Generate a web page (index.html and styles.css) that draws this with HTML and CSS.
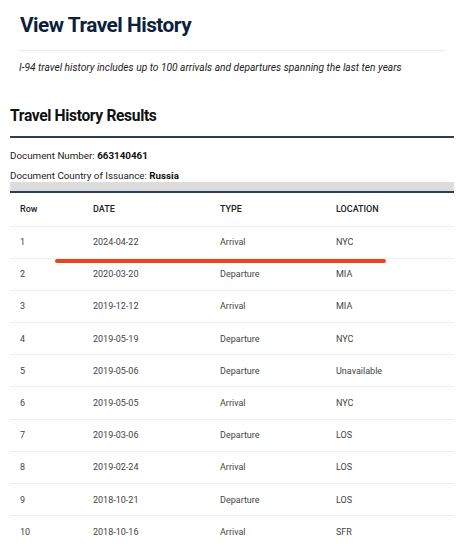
FILE: index.html
```html
<!DOCTYPE html>
<html>
<head>
<meta charset="utf-8">
<link rel="stylesheet" href="styles.css">
</head>
<body>
<section class="intro">
  <h1 class="title">View Travel History</h1>
  <p class="note">I-94 travel history includes up to 100 arrivals and departures spanning the last ten years</p>
</section>
<section class="results">
  <h2 class="subtitle">Travel History Results</h2>
  <div class="meta">
    <p class="meta-line">Document Number: <b>663140461</b></p>
    <p class="meta-line">Document Country of Issuance: <b>Russia</b></p>
  </div>
  <div class="band"></div>
  <div class="table">
    <div class="row head"><span>Row</span><span>DATE</span><span>TYPE</span><span>LOCATION</span></div>
    <div class="row first"><span>1</span><span>2024-04-22</span><span>Arrival</span><span>NYC</span><i class="mark"></i></div>
    <div class="row"><span>2</span><span>2020-03-20</span><span>Departure</span><span>MIA</span></div>
    <div class="row"><span>3</span><span>2019-12-12</span><span>Arrival</span><span>MIA</span></div>
    <div class="row"><span>4</span><span>2019-05-19</span><span>Departure</span><span>NYC</span></div>
    <div class="row"><span>5</span><span>2019-05-06</span><span>Departure</span><span>Unavailable</span></div>
    <div class="row"><span>6</span><span>2019-05-05</span><span>Arrival</span><span>NYC</span></div>
    <div class="row"><span>7</span><span>2019-03-06</span><span>Departure</span><span>LOS</span></div>
    <div class="row"><span>8</span><span>2019-02-24</span><span>Arrival</span><span>LOS</span></div>
    <div class="row"><span>9</span><span>2018-10-21</span><span>Departure</span><span>LOS</span></div>
    <div class="row"><span>10</span><span>2018-10-16</span><span>Arrival</span><span>SFR</span></div>
  </div>
</section>
</body>
</html>
```
FILE: styles.css
```css
html, body {
  margin: 0;
  padding: 0;
  background: #ffffff;
  font-family: Roboto, "Liberation Sans", Arial, sans-serif;
  overflow: hidden;
}
.intro {
  padding: 10px 23px 0 19px;
}
.title {
  margin: 0;
  padding: 0 0 10px 1px;
  font-size: 20.8px;
  letter-spacing: -0.5px;
  line-height: 30px;
  font-weight: 700;
  color: #0d1f3c;
  border-bottom: 1px solid #ececec;
}
.note {
  margin: 0;
  padding-top: 10px;
  font-size: 10.2px;
  line-height: 14px;
  font-style: italic;
  color: #222;
}
.results {
  padding: 0 14px 0 10px;
}
.subtitle {
  margin: 0;
  padding-top: 30px;
  padding-bottom: 9px;
  font-size: 15.6px;
  letter-spacing: -0.35px;
  line-height: 22px;
  font-weight: 700;
  color: #111;
  border-bottom: 2px solid #2f3e55;
}
.meta {
  padding-top: 11px;
}
.meta-line {
  margin: 0 0 7px;
  font-size: 9.8px;
  line-height: 13px;
  color: #222;
}
.meta-line:last-child {
  margin-bottom: 0;
}
.meta-line b {
  font-weight: 700;
  color: #111;
}
.band {
  height: 9px;
  background: #dcdcdc;
  border-bottom: 2px solid #2f3e55;
}
.table {
  display: flex;
  flex-direction: column;
}
.row {
  position: relative;
  display: grid;
  grid-template-columns: 73px 127px 116px 1fr;
  height: 32.2px;
  align-items: center;
  border-bottom: 1px solid #efefef;
  box-sizing: border-box;
  font-size: 9px;
  color: #444;
}
.row span {
  padding-left: 10px;
}
.row.head {
  height: 33.5px;
  font-weight: 500;
  color: #222;
}
.mark {
  position: absolute;
  left: 45px;
  top: 32px;
  width: 331px;
  height: 4px;
  border-radius: 2px;
  background: #e8461e;
}
```
